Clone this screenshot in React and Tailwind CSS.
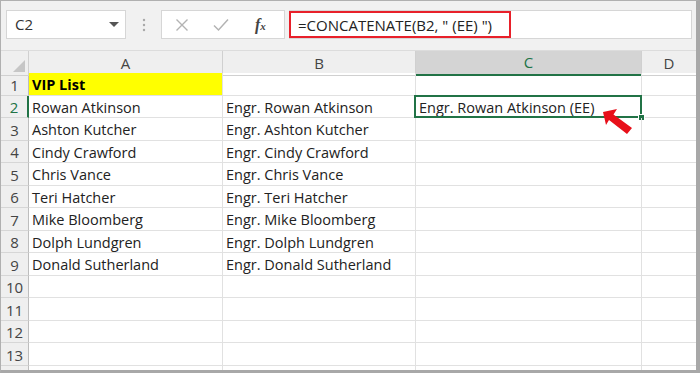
import React from 'react';

const rows = [
  ['VIP List', '', ''],
  ['Rowan Atkinson', 'Engr. Rowan Atkinson', 'Engr. Rowan Atkinson (EE)'],
  ['Ashton Kutcher', 'Engr. Ashton Kutcher', ''],
  ['Cindy Crawford', 'Engr. Cindy Crawford', ''],
  ['Chris Vance', 'Engr. Chris Vance', ''],
  ['Teri Hatcher', 'Engr. Teri Hatcher', ''],
  ['Mike Bloomberg', 'Engr. Mike Bloomberg', ''],
  ['Dolph Lundgren', 'Engr. Dolph Lundgren', ''],
  ['Donald Sutherland', 'Engr. Donald Sutherland', ''],
  ['', '', ''],
  ['', '', ''],
  ['', '', ''],
  ['', '', ''],
  ['', '', ''],
];

const cols = 'grid grid-cols-[28px_194px_193px_226px_1fr]';

function Toolbar() {
  return (
    <div className="h-[49px] bg-[#f1f1f1] flex items-start pt-[9px] pl-[5px] pr-[4px]">
      <div className="w-[120px] h-[29px] bg-white border border-[#d6d6d6] flex items-center justify-between pl-[8px] pr-[6px]">
        <span className="text-[15px] text-[#333]">C2</span>
        <svg width="10" height="6" viewBox="0 0 10 6"><path d="M0 0h10L5 5z" fill="#555" /></svg>
      </div>
      <div className="w-[35px] h-[29px] flex items-center justify-center">
        <svg width="4" height="14" viewBox="0 0 4 14">
          <circle cx="2" cy="2" r="1.2" fill="#a8a8a8" />
          <circle cx="2" cy="7" r="1.2" fill="#a8a8a8" />
          <circle cx="2" cy="12" r="1.2" fill="#a8a8a8" />
        </svg>
      </div>
      <div className="w-[124px] h-[29px] bg-white border border-[#d6d6d6] flex items-center">
        <svg className="ml-[13px]" width="14" height="14" viewBox="0 0 14 14">
          <path d="M1.5 1.5l11 11M12.5 1.5l-11 11" stroke="#b3b3b3" strokeWidth="1.4" />
        </svg>
        <svg className="ml-[24px]" width="16" height="14" viewBox="0 0 16 14">
          <path d="M1 7.5l4.5 4.5L15 1.5" stroke="#b3b3b3" strokeWidth="1.5" fill="none" />
        </svg>
        <span className="ml-[26px] text-[16px] italic font-bold text-[#444]" style={{ fontFamily: '"Liberation Serif", serif' }}>
          f<span className="text-[11px]">x</span>
        </span>
      </div>
      <div className="ml-[4px] flex-1 h-[29px] bg-white border border-[#d6d6d6] relative flex items-center">
        <div className="absolute left-[-1px] top-0 w-[222px] h-[27px] border-2 border-[#e8202a]" />
        <span className="pl-[8px] pt-[1px] text-[15px] text-[#222]">=CONCATENATE(B2, " (EE) ")</span>
      </div>
    </div>
  );
}

function Header() {
  return (
    <div className={`${cols} h-[23px] bg-[#efefef] border-t border-[#dcdcdc] text-[15px] text-[#444]`}>
      <div className="border-r border-[#d0d0d0] border-b relative">
        <svg className="absolute right-[3px] bottom-[3px]" width="12" height="12" viewBox="0 0 12 12">
          <path d="M12 0v12H0z" fill="#c6c6c6" />
        </svg>
      </div>
      <div className="border-r border-b border-[#d0d0d0] flex items-center justify-center">A</div>
      <div className="border-r border-b border-[#d0d0d0] flex items-center justify-center">B</div>
      <div className="border-r border-[#d0d0d0] bg-[#d4d4d4] border-b-2 border-b-[#217346] text-[#217346] flex items-center justify-center">C</div>
      <div className="border-b border-[#d0d0d0] flex items-center justify-center">D</div>
    </div>
  );
}

export default function App() {
  return (
    <div
      className="w-[700px] h-[373px] overflow-hidden bg-white border-l border-t border-[#b0b0b0] border-r-[4px] border-r-[#a8a8a8] border-b-[3px] border-b-[#a8a8a8] relative"
      style={{ fontFamily: '"Open Sans", "Noto Sans", sans-serif' }}
    >
      <Toolbar />
      <Header />
      {rows.map((r, i) => (
        <div key={i} className={`${cols} h-[22.5px] text-[14.5px] text-[#222] leading-none`}>
          <div
            className={`bg-[#efefef] border-b border-[#d6d6d6] flex items-center justify-center pt-[3px] text-[15px] ${
              i === 1 ? 'border-r-2 border-r-[#217346] text-[#217346] bg-[#e2e2e2]' : 'border-r border-r-[#bdbdbd] text-[#444]'
            }`}
          >
            {i < 13 ? i + 1 : ''}
          </div>
          <div className={`border-r border-b border-[#e1e1e1] flex items-center pl-[3px] pt-[3px] ${i === 0 ? 'bg-[#ffff00] font-bold text-black' : ''}`}>
            {r[0]}
          </div>
          <div className="border-r border-b border-[#e1e1e1] flex items-center pl-[3px] pt-[3px]">{r[1]}</div>
          <div className="border-r border-b border-[#e1e1e1] flex items-center pl-[3px] pt-[3px] relative">
            {r[2]}
            {i === 1 && (
              <>
                <div className="absolute left-[-2px] top-[-1px] right-[-1px] bottom-[-1px] border-2 border-[#217346]" />
                <div className="absolute right-[-4px] bottom-[-4px] w-[7px] h-[7px] bg-[#217346] border border-white" />
              </>
            )}
          </div>
          <div className="border-b border-[#e1e1e1]" />
        </div>
      ))}
      <svg className="absolute left-[600px] top-[107px]" width="34" height="28" viewBox="0 0 34 28">
        <path d="M2 4 L16 1 L12.5 6.5 L31 20 L26 26 L8 12 L5 17 Z" fill="#e8101a" />
      </svg>
    </div>
  );
}
